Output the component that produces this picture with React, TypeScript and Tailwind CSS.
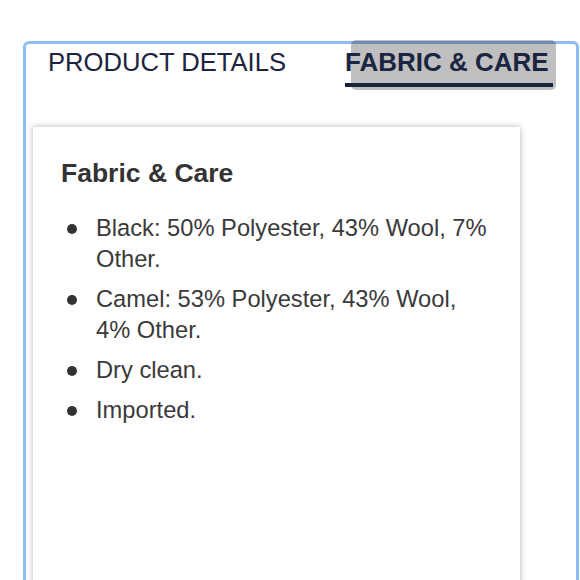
const items = [
  "Black: 50% Polyester, 43% Wool, 7% Other.",
  "Camel: 53% Polyester, 43% Wool, 4% Other.",
  "Dry clean.",
  "Imported.",
];

export default function App() {
  return (
    <div className="h-[580px] overflow-hidden bg-white pt-[41px] pl-[23px] pr-px font-['Liberation_Sans',Arial,sans-serif]">
      <div className="relative h-[560px] rounded-t-[6px] border-[3px] border-b-0 border-[#8fbdf2]">
        {/* selected tab highlight */}
        <div className="absolute left-[325px] top-[-4px] h-[50px] w-[205px] rounded-[5px] bg-black/25" />

        {/* tabs */}
        <div className="relative flex pt-[3px] pl-[22px] text-[#1b2440]">
          <div className="w-[297px] text-[25.6px] leading-[30px]">PRODUCT DETAILS</div>
          <div className="w-[208px] border-b-4 border-[#18223b] pb-[6px] text-[26px] font-bold leading-[30px]">
            FABRIC &amp; CARE
          </div>
        </div>

        {/* card */}
        <div className="mt-[40px] ml-[7px] mr-[56px] h-[500px] bg-white pt-[31px] pl-[28px] shadow-[0_0_6px_rgba(0,0,0,0.3)]">
          <h2 className="text-[26.5px] font-bold leading-[31px] text-[#333333]">Fabric &amp; Care</h2>
          <ul className="mt-[24px] flex flex-col gap-[9px]">
            {items.map((item) => (
              <li key={item} className="flex text-[23.7px] leading-[31px] text-[#3a3a3a]">
                <span className="ml-[6px] mt-[11px] h-[10px] w-[10px] shrink-0 rounded-full bg-[#333333]" />
                <span className="ml-[19px] w-[398px]">{item}</span>
              </li>
            ))}
          </ul>
        </div>
      </div>
    </div>
  );
}
